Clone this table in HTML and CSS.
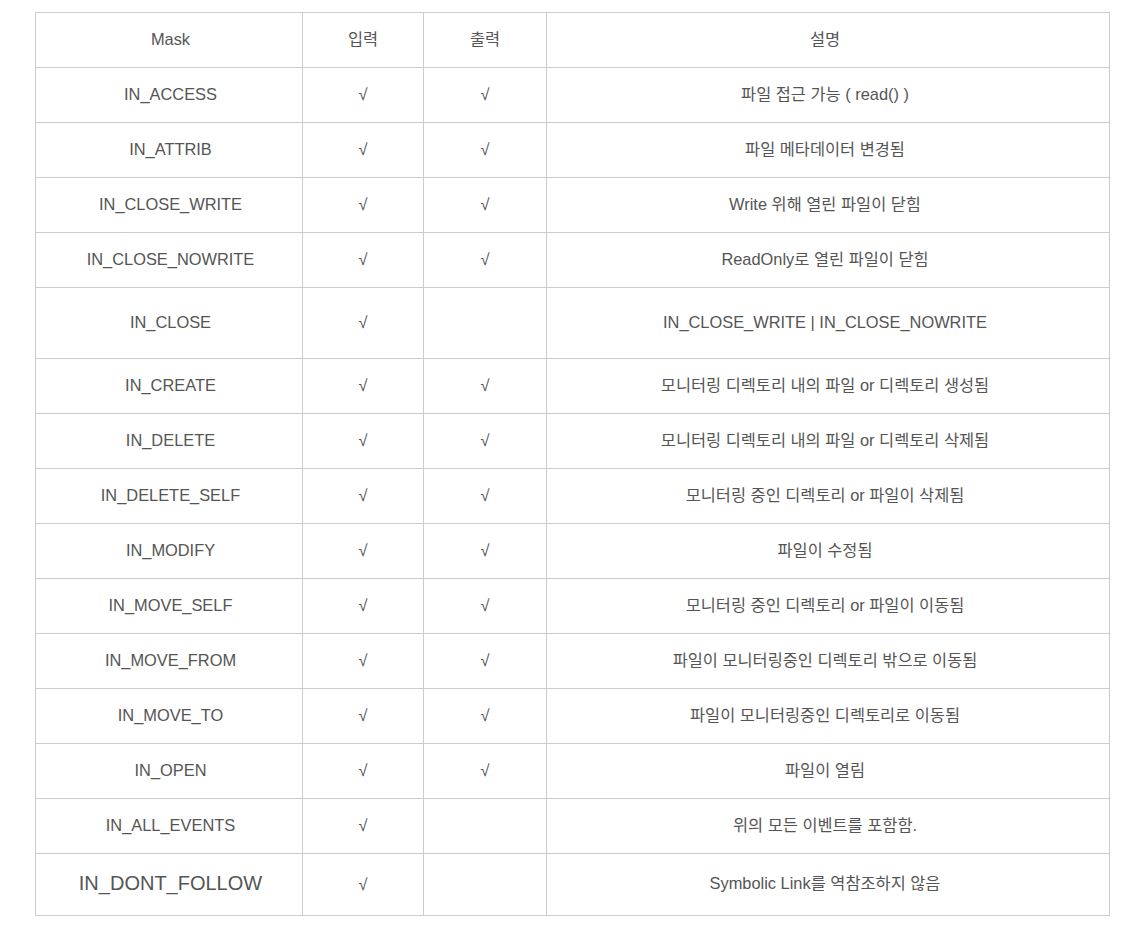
FILE: index.html
```html
<!DOCTYPE html>
<html lang="ko">
<head>
<meta charset="utf-8">
<title>inotify mask</title>
<link rel="stylesheet" href="styles.css">
</head>
<body>
<table class="mask-table">
  <colgroup>
    <col class="c-mask"><col class="c-in"><col class="c-out"><col class="c-desc">
  </colgroup>
  <thead>
    <tr class="row"><th class="mask">Mask</th><th>입력</th><th>출력</th><th class="desc">설명</th></tr>
  </thead>
  <tbody>
    <tr class="row"><td class="mask">IN_ACCESS</td><td>√</td><td>√</td><td class="desc">파일 접근 가능 ( read() )</td></tr>
    <tr class="row"><td class="mask">IN_ATTRIB</td><td>√</td><td>√</td><td class="desc">파일 메타데이터 변경됨</td></tr>
    <tr class="row"><td class="mask">IN_CLOSE_WRITE</td><td>√</td><td>√</td><td class="desc">Write 위해 열린 파일이 닫힘</td></tr>
    <tr class="row"><td class="mask">IN_CLOSE_NOWRITE</td><td>√</td><td>√</td><td class="desc">ReadOnly로 열린 파일이 닫힘</td></tr>
    <tr class="row tall"><td class="mask">IN_CLOSE</td><td>√</td><td></td><td class="desc">IN_CLOSE_WRITE | IN_CLOSE_NOWRITE</td></tr>
    <tr class="row"><td class="mask">IN_CREATE</td><td>√</td><td>√</td><td class="desc">모니터링 디렉토리 내의 파일 or 디렉토리 생성됨</td></tr>
    <tr class="row"><td class="mask">IN_DELETE</td><td>√</td><td>√</td><td class="desc">모니터링 디렉토리 내의 파일 or 디렉토리 삭제됨</td></tr>
    <tr class="row"><td class="mask">IN_DELETE_SELF</td><td>√</td><td>√</td><td class="desc">모니터링 중인 디렉토리 or 파일이 삭제됨</td></tr>
    <tr class="row"><td class="mask">IN_MODIFY</td><td>√</td><td>√</td><td class="desc">파일이 수정됨</td></tr>
    <tr class="row"><td class="mask">IN_MOVE_SELF</td><td>√</td><td>√</td><td class="desc">모니터링 중인 디렉토리 or 파일이 이동됨</td></tr>
    <tr class="row"><td class="mask">IN_MOVE_FROM</td><td>√</td><td>√</td><td class="desc">파일이 모니터링중인 디렉토리 밖으로 이동됨</td></tr>
    <tr class="row"><td class="mask">IN_MOVE_TO</td><td>√</td><td>√</td><td class="desc">파일이 모니터링중인 디렉토리로 이동됨</td></tr>
    <tr class="row"><td class="mask">IN_OPEN</td><td>√</td><td>√</td><td class="desc">파일이 열림</td></tr>
    <tr class="row"><td class="mask">IN_ALL_EVENTS</td><td>√</td><td></td><td class="desc">위의 모든 이벤트를 포함함.</td></tr>
    <tr class="row last"><td class="mask big">IN_DONT_FOLLOW</td><td>√</td><td></td><td class="desc">Symbolic Link를 역참조하지 않음</td></tr>
  </tbody>
</table>
</body>
</html>
```
FILE: styles.css
```css
html, body {
  margin: 0;
  padding: 0;
  background: #fff;
}
body {
  padding: 12px 0 0 35px;
  font-family: "Liberation Sans", Arial, "Noto Sans CJK KR", sans-serif;
  font-size: 16.4px;
  color: #555;
}
.mask-table {
  border-collapse: collapse;
  table-layout: fixed;
  width: 1074px;
}
.c-mask { width: 267px; }
.c-in { width: 121px; }
.c-out { width: 123px; }
.c-desc { width: 563px; }
.mask-table th,
.mask-table td {
  border: 1px solid #ccc;
  text-align: center;
  vertical-align: middle;
  padding: 0 4px 2px 4px;
  font-weight: normal;
  line-height: 20px;
}
.mask-table .mask { padding-left: 6px; padding-right: 3px; }
.mask-table .desc { padding-left: 1px; padding-right: 7px; }
.row { height: 55px; }
.row.tall { height: 71px; }
.row.last { height: 62px; }
.mask-table .big { font-size: 20px; padding-bottom: 4px; }
.row.last .desc { padding-bottom: 4px; }
```
